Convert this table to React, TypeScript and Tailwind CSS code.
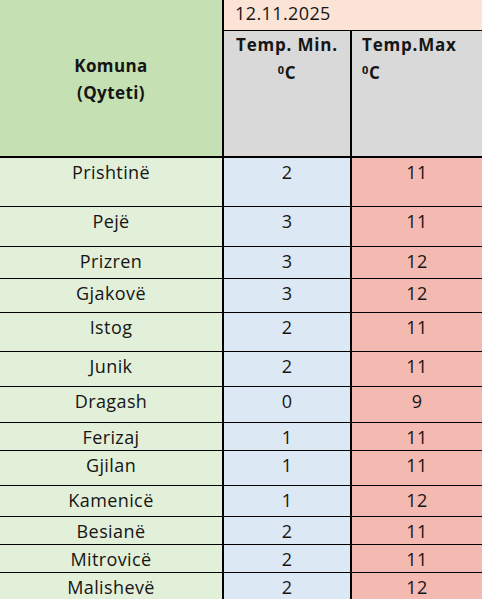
import React from "react";

const rows: [string, number, number, number][] = [
  ["Prishtinë", 2, 11, 49],
  ["Pejë", 3, 11, 40],
  ["Prizren", 3, 12, 32],
  ["Gjakovë", 3, 12, 34],
  ["Istog", 2, 11, 39],
  ["Junik", 2, 11, 35],
  ["Dragash", 0, 9, 36],
  ["Ferizaj", 1, 11, 28],
  ["Gjilan", 1, 11, 35],
  ["Kamenicë", 1, 12, 31],
  ["Besianë", 2, 11, 28],
  ["Mitrovicë", 2, 11, 28],
  ["Malishevë", 2, 12, 40],
];

export default function App() {
  return (
    <div
      className="w-[482px] h-[599px] overflow-hidden bg-white text-[#151515] tracking-[0.4px]"
      style={{ fontFamily: '"Open Sans", "Noto Sans", sans-serif' }}
    >
      <div className="grid grid-cols-[224px_128px_130px] grid-rows-[31px_1fr] h-[158px] border-b-2 border-black">
        <div className="row-span-2 bg-[#c5e0b3] border-r-2 border-black flex flex-col items-center justify-center font-bold text-[17px] leading-[27px] pt-[2px]">
          <div>Komuna</div>
          <div>(Qyteti)</div>
        </div>
        <div className="col-span-2 bg-[#fbe3d6] border-b-[1.5px] border-black pl-[11px] pt-[3px] text-[18px] leading-[20px]">
          12.11.2025
        </div>
        <div className="bg-[#d9d9d9] border-r-2 border-black text-center font-bold text-[17px] pt-[4px] tracking-[0.8px]">
          <div className="leading-[20px]">Temp. Min.</div>
          <div className="leading-[20px] mt-[8px]">
            <sup className="text-[11px] font-bold">0</sup>C
          </div>
        </div>
        <div className="bg-[#d9d9d9] font-bold text-[17px] pt-[4px] pl-[10px] tracking-[0.8px]">
          <div className="leading-[20px]">Temp.Max</div>
          <div className="leading-[20px] mt-[8px]">
            <sup className="text-[11px] font-bold">0</sup>C
          </div>
        </div>
      </div>
      {rows.map(([name, min, max, h]) => (
        <div
          key={name}
          className="grid grid-cols-[224px_128px_130px] border-b-[1.5px] border-black text-[18px] leading-[20px] text-center"
          style={{ height: h }}
        >
          <div className="bg-[#e2efd9] border-r-2 border-black pt-[4px]">{name}</div>
          <div className="bg-[#dde8f5] border-r-2 border-black pt-[4px]">{min}</div>
          <div className="bg-[#f4b9b1] pt-[4px]">{max}</div>
        </div>
      ))}
    </div>
  );
}
